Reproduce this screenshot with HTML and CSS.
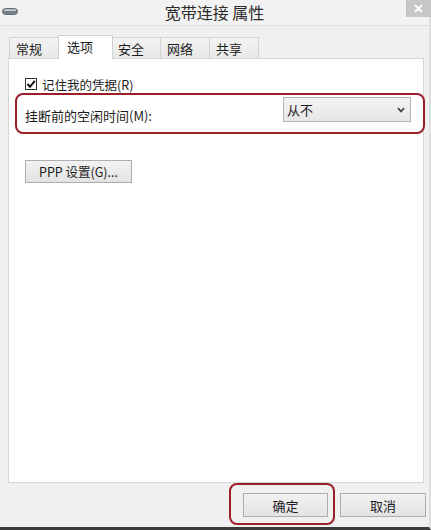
FILE: index.html
```html
<!DOCTYPE html>
<html lang="zh-CN">
<head>
    <meta charset="UTF-8">
    <meta name="viewport" content="width=device-width, initial-scale=1.0">
    <title>宽带连接 属性</title>
    <link rel="stylesheet" href="styles.css">
</head>
<body>

<div class="window">
    <div class="titlebar">
        <div class="title-left">
            <svg class="app-icon" width="16" height="7" viewBox="0 0 16 7">
                <rect x="0.5" y="0.5" width="15" height="6" rx="3" fill="#76808a" stroke="#66707a"/>
                <rect x="2" y="1.3" width="12" height="1.8" rx="0.9" fill="#c4ccd4"/>
            </svg>
        </div>
        <div class="title">宽带连接 属性</div>
        <div class="title-right">
            <div class="close-btn">
                <svg width="9" height="9" viewBox="0 0 9 9">
                    <path d="M1 1 L8 8 M8 1 L1 8" stroke="#fff" stroke-width="1.8"/>
                </svg>
            </div>
        </div>
    </div>

    <div class="tabs">
        <div class="tab">常规</div>
        <div class="tab active">选项</div>
        <div class="tab">安全</div>
        <div class="tab">网络</div>
        <div class="tab">共享</div>
    </div>

    <div class="panel">
        <div class="check-row">
            <span class="checkbox">
                <svg width="10" height="10" viewBox="0 0 10 10">
                    <path d="M1.5 5 L4 7.8 L8.8 1.8" fill="none" stroke="#111" stroke-width="2"/>
                </svg>
            </span>
            <span>记住我的凭据(R)</span>
        </div>

        <div class="idle-row">
            <span class="idle-label">挂断前的空闲时间(M):</span>
            <div class="select">
                <span>从不</span>
                <svg width="8" height="6" viewBox="0 0 8 6">
                    <path d="M1 1.2 L4 4.5 L7 1.2" fill="none" stroke="#444" stroke-width="1.8"/>
                </svg>
            </div>
        </div>

        <button class="btn ppp-btn">PPP 设置(G)...</button>
    </div>

    <div class="footer">
        <div class="ok-mark">
            <button class="btn dlg-btn">确定</button>
        </div>
        <button class="btn dlg-btn cancel-btn">取消</button>
    </div>
</div>

</body>
</html>
```

FILE: styles.css
```css
html, body {
    margin: 0;
    padding: 0;
}
body {
    width: 431px;
    height: 530px;
    overflow: hidden;
    background-color: #f0f0f0;
    font-family: "Noto Sans CJK SC", "Noto Sans", sans-serif;
    color: #1c1c1c;
}
.window {
    height: 530px;
    box-sizing: border-box;
    display: flex;
    flex-direction: column;
    border-bottom: 3px solid #3c3c3c;
    border-right: 2px solid #dedede;
}
.titlebar {
    height: 25px;
    border-bottom: 1px solid #dcdcdc;
    background-color: #f2f2f2;
    display: grid;
    grid-template-columns: 1fr auto 1fr;
}
.title-left {
    padding: 8px 0 0 2px;
}
.app-icon {
    display: block;
}
.title {
    font-size: 16px;
    line-height: 25px;
    color: #2a2a2a;
}
.title-right {
    display: flex;
    justify-content: flex-end;
    align-items: flex-start;
    margin-right: -2px;
}
.close-btn {
    width: 25px;
    height: 17px;
    background-color: #c6c6c6;
    display: flex;
    align-items: center;
    justify-content: center;
}
.tabs {
    display: flex;
    align-items: flex-end;
    height: 24px;
    margin: 9px 0 0 9px;
}
.tab {
    height: 21px;
    box-sizing: border-box;
    margin-bottom: 1px;
    padding: 0 16px 0 6px;
    border: 1px solid #d3d3d3;
    border-bottom: none;
    border-left: none;
    background: linear-gradient(#f3f3f3, #e8e8e8);
    font-size: 13px;
    line-height: 21px;
}
.tab:first-child {
    border-left: 1px solid #d3d3d3;
}
.tab.active {
    height: 24px;
    margin: 0 -1px 0 -1px;
    padding: 0 19px 0 8px;
    border-left: 1px solid #d3d3d3;
    background: #fff;
    line-height: 21px;
    position: relative;
    z-index: 1;
}
.panel {
    flex: 1;
    margin: -1px 5px 0 8px;
    border: 1px solid #d6d6d6;
    background-color: #fff;
    padding: 17px 0 0 16px;
    font-size: 13px;
}
.check-row {
    display: flex;
    align-items: center;
    gap: 5px;
    height: 16px;
    font-size: 12.5px;
}
.checkbox {
    width: 12px;
    height: 12px;
    box-sizing: border-box;
    border: 1px solid #333;
    background: #fff;
    display: flex;
    align-items: center;
    justify-content: center;
}
.idle-row {
    margin: 1px -2px 0 -10px;
    height: 41px;
    box-sizing: border-box;
    border: 2px solid #9a1f29;
    border-radius: 8px;
    display: flex;
    align-items: center;
    justify-content: space-between;
    padding: 0 12px 0 8px;
}
.idle-label {
    padding-top: 3px;
}
.select {
    align-self: flex-start;
    margin-top: 2px;
    width: 128px;
    height: 25px;
    box-sizing: border-box;
    border: 1px solid #b4b4b4;
    background: linear-gradient(#f3f3f3, #e6e6e6);
    display: flex;
    align-items: center;
    justify-content: space-between;
    padding: 0 5px 0 3px;
}
.btn {
    font-family: "Noto Sans CJK SC", "Noto Sans", sans-serif;
    border: 1px solid #adadad;
    background: linear-gradient(#f2f2f2, #e3e3e3);
    color: #1c1c1c;
    padding: 0;
    box-sizing: border-box;
}
.ppp-btn {
    display: block;
    margin-top: 26px;
    width: 107px;
    height: 23px;
    font-size: 12.5px;
}
.footer {
    height: 44px;
    display: flex;
    justify-content: flex-end;
    align-items: flex-start;
    padding-right: 3px;
}
.ok-mark {
    border: 2px solid #9a1f29;
    border-radius: 8px;
    padding: 8px 5px 6px 12px;
}
.dlg-btn {
    display: block;
    width: 85px;
    height: 24px;
    font-size: 13px;
}
.cancel-btn {
    width: 86px;
    margin: 10px 0 0 5px;
}
```
